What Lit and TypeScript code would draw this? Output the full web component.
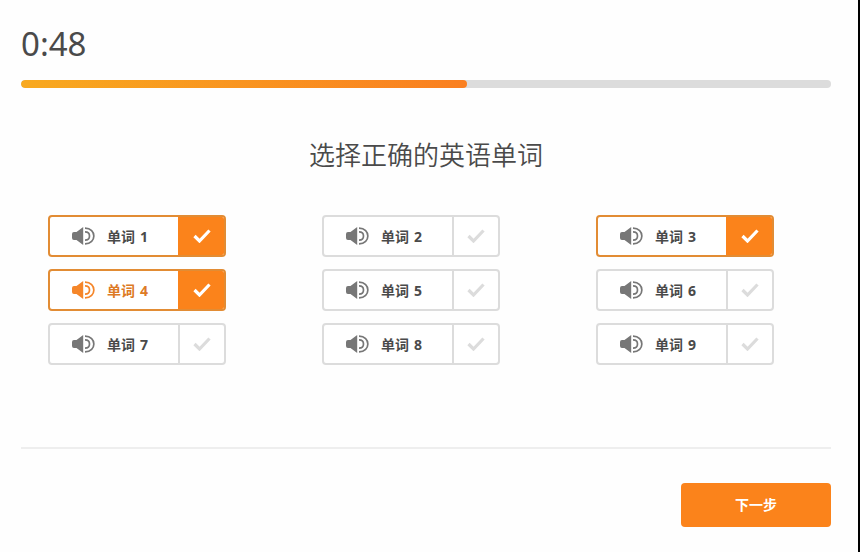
import { LitElement, html, css, svg } from "lit";
import { customElement, property, state } from "lit/decorators.js";
import { classMap } from "lit/directives/class-map.js";

const speakerIcon = svg`
  <path d="M0 7 Q0 5 2 5 H4.5 L11.2 0 V18 L4.5 13 H2 Q0 13 0 11 Z" fill="currentColor" />
  <path d="M13 4.9 C19 4.9 19 13.1 13 13.1" fill="none" stroke="currentColor" stroke-width="1.7" />
  <path d="M13 1.2 C24.8 1.2 24.8 16.8 13 16.8" fill="none" stroke="currentColor" stroke-width="1.7" />
`;

@customElement("word-card")
class WordCard extends LitElement {
  @property({ type: Number }) number = 1;
  @property({ type: Boolean }) checked = false;
  @property({ type: Boolean }) playing = false;

  static styles = css`
    :host {
      display: block;
    }
    .card {
      display: flex;
      height: 38px;
      border: 2px solid #dcdcdc;
      border-radius: 4px;
      background: #fff;
      overflow: hidden;
    }
    .card.checked {
      border-color: #e28c34;
    }
    .play {
      flex: 1;
      min-width: 0;
      display: flex;
      align-items: center;
      gap: 12px;
      margin: 0;
      padding: 0 0 0 22px;
      border: 0;
      background: none;
      color: #4a4a4a;
      font: 700 14px/20px "Noto Sans CJK SC", sans-serif;
      white-space: nowrap;
      cursor: pointer;
    }
    .play.playing {
      color: #dd7a25;
    }
    .name {
      display: flex;
      align-items: baseline;
      gap: 5px;
    }
    .number {
      font-family: "Noto Sans", sans-serif;
      font-weight: 700;
    }
    .speaker {
      flex: none;
      width: 23px;
      height: 18px;
      color: #777;
    }
    .playing .speaker {
      color: #f5862a;
    }
    .tick {
      flex: none;
      display: flex;
      align-items: center;
      justify-content: center;
      width: 44px;
      border-left: 2px solid #dcdcdc;
      color: #dcdcdc;
      cursor: pointer;
    }
    .checked .tick {
      border-color: #fb831b;
      background: #fb831b;
      color: #fff;
    }
    .box {
      appearance: none;
      position: absolute;
      margin: 0;
      width: 1px;
      height: 1px;
      opacity: 0;
    }
    .mark {
      width: 18px;
      height: 14px;
    }
  `;

  private toggle(event: Event) {
    this.checked = (event.target as HTMLInputElement).checked;
  }

  render() {
    return html`
      <div class=${classMap({ card: true, checked: this.checked })}>
        <button type="button" class=${classMap({ play: true, playing: this.playing })}>
          <svg class="speaker" viewBox="0 0 23 18" aria-hidden="true">${speakerIcon}</svg>
          <span class="name"><span>单词</span> <span class="number">${this.number}</span></span>
        </button>
        <label class="tick">
          <input
            class="box"
            type="checkbox"
            aria-label="单词 ${this.number}"
            .checked=${this.checked}
            @change=${this.toggle}
          />
          <svg class="mark" viewBox="0 0 18 14" aria-hidden="true">
            <path d="M1.5 7 L6.5 12 L16.5 1.5" fill="none" stroke="currentColor" stroke-width="3.2" />
          </svg>
        </label>
      </div>
    `;
  }
}

@customElement("app-root")
class AppRoot extends LitElement {
  @state() private words = [1, 2, 3, 4, 5, 6, 7, 8, 9];
  @state() private selected = new Set([1, 3, 4]);
  @state() private playing = 4;

  static styles = css`
    :host {
      display: block;
      box-sizing: border-box;
      min-height: 100vh;
      padding: 20px 27px 24px 21px;
      border-right: 2px solid #000;
      background: #fefefe;
      color: #4a4a4a;
      font-family: "Noto Sans", "Noto Sans CJK SC", sans-serif;
    }
    .timer {
      font-size: 33px;
      line-height: 48px;
    }
    .progress {
      appearance: none;
      display: block;
      width: 100%;
      height: 8px;
      margin-top: 12px;
      border: 0;
      border-radius: 4px;
      background: #dcdcdc;
      overflow: hidden;
    }
    .progress::-webkit-progress-bar {
      background: #dcdcdc;
    }
    .progress::-webkit-progress-value {
      border-radius: 4px;
      background: linear-gradient(90deg, #f8a91f, #fa7f20);
    }
    .title {
      margin: 46px 0 0;
      font-family: "Noto Sans CJK SC", sans-serif;
      font-size: 26px;
      font-weight: 350;
      line-height: 40px;
      text-align: center;
    }
    .words {
      display: grid;
      grid-template-columns: repeat(3, 1fr);
      gap: 12px 96px;
      margin: 41px 0 0;
      padding: 0 57px 0 27px;
      list-style: none;
    }
    .footer {
      display: flex;
      justify-content: flex-end;
      margin-top: 82px;
      padding-top: 34px;
      border-top: 2px solid #eee;
    }
    .next {
      width: 150px;
      height: 44px;
      padding: 0;
      border: 0;
      border-radius: 4px;
      background: #fb831b;
      color: #fff;
      font: 700 14px/20px "Noto Sans", "Noto Sans CJK SC", sans-serif;
      cursor: pointer;
    }
  `;

  render() {
    return html`
      <div class="timer" role="timer">0:48</div>
      <progress class="progress" max="100" value="55" aria-label="0:48"></progress>
      <h1 class="title">选择正确的英语单词</h1>
      <ul class="words">
        ${this.words.map(
          (n) => html`
            <li>
              <word-card
                .number=${n}
                .checked=${this.selected.has(n)}
                .playing=${this.playing === n}
              ></word-card>
            </li>
          `
        )}
      </ul>
      <div class="footer">
        <button type="button" class="next">下一步</button>
      </div>
    `;
  }
}
